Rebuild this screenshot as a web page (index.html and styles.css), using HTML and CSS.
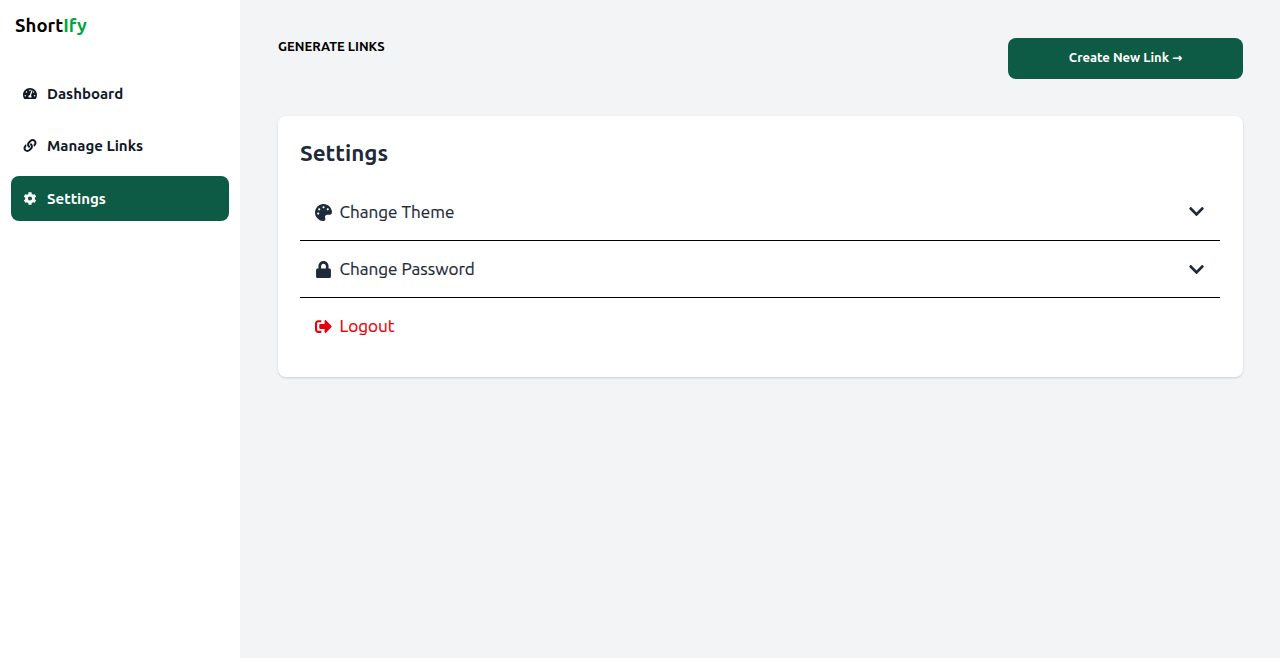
FILE: index.html
```
<!DOCTYPE html>
<html lang="en">
<head>
<meta charset="utf-8">
<title>Shortify</title>
<link rel="stylesheet" href="styles.css">
</head>
<body>
<div class="app">
  <aside class="sidebar">
    <div class="logo">Short<span class="logo-accent">Ify</span></div>
    <nav class="nav">
      <a class="nav-item">
        <svg class="nav-icon" viewBox="0 0 576 512"><path d="M288 32C128.94 32 0 160.94 0 320c0 52.8 14.25 102.26 39.06 144.8 5.61 9.62 16.3 15.2 27.44 15.2h443c11.14 0 21.83-5.58 27.44-15.2C561.75 422.26 576 372.8 576 320c0-159.06-128.94-288-288-288zm0 64c14.71 0 26.58 10.13 30.32 23.65-1.11 2.26-2.64 4.23-3.45 6.67l-9.22 27.67c-5.13 3.49-10.97 6.01-17.64 6.01-17.67 0-32-14.33-32-32S270.33 96 288 96zM96 384c-17.67 0-32-14.33-32-32s14.33-32 32-32 32 14.33 32 32-14.33 32-32 32zm48-160c-17.67 0-32-14.33-32-32s14.33-32 32-32 32 14.33 32 32-14.33 32-32 32zm246.77-72.41l-61.33 184C343.13 347.33 352 364.54 352 384c0 11.72-3.38 22.55-8.88 32H232.88c-5.5-9.45-8.88-20.28-8.88-32 0-33.94 26.5-61.43 59.9-63.59l61.34-184.01c4.17-12.56 17.73-19.45 30.36-15.17 12.57 4.19 19.35 17.79 15.17 30.36zm14.66 57.2l15.52-46.55c3.47-1.29 7.13-2.23 11.05-2.23 17.67 0 32 14.33 32 32s-14.33 32-32 32c-11.38-.01-20.89-6.27-26.57-15.22zM480 384c-17.67 0-32-14.33-32-32s14.33-32 32-32 32 14.33 32 32-14.33 32-32 32z"/></svg>
        <span>Dashboard</span>
      </a>
      <a class="nav-item">
        <svg class="nav-icon" viewBox="0 0 512 512"><path d="M326.612 185.391c59.747 59.809 58.927 155.698.36 214.59-.11.12-.24.25-.36.37l-67.2 67.2c-59.27 59.27-155.699 59.262-214.96 0-59.27-59.26-59.27-155.7 0-214.96l37.106-37.106c9.84-9.84 26.786-3.3 27.294 10.606.648 17.722 3.826 35.527 9.69 52.721 1.986 5.822.567 12.262-3.783 16.612l-13.087 13.087c-28.026 28.026-28.905 73.66-1.155 101.96 28.024 28.579 74.086 28.749 102.325.51l67.2-67.19c28.191-28.191 28.073-73.757 0-101.83-3.701-3.694-7.429-6.564-10.341-8.569a16.037 16.037 0 0 1-6.947-12.606c-.396-10.567 3.348-21.456 11.698-29.806l21.054-21.055c5.521-5.521 14.182-6.199 20.584-1.731a152.482 152.482 0 0 1 20.522 17.197zM467.547 44.449c-59.261-59.262-155.69-59.27-214.96 0l-67.2 67.2c-.12.12-.25.25-.36.37-58.566 58.892-59.387 154.781.36 214.59a152.454 152.454 0 0 0 20.521 17.196c6.402 4.468 15.064 3.789 20.584-1.731l21.054-21.055c8.35-8.35 12.094-19.239 11.698-29.806a16.037 16.037 0 0 0-6.947-12.606c-2.912-2.005-6.64-4.875-10.341-8.569-28.073-28.073-28.191-73.639 0-101.83l67.2-67.19c28.239-28.239 74.3-28.069 102.325.51 27.75 28.3 26.872 73.934-1.155 101.96l-13.087 13.087c-4.35 4.35-5.769 10.79-3.783 16.612 5.864 17.194 9.042 34.999 9.69 52.721.509 13.906 17.454 20.446 27.294 10.606l37.106-37.106c59.271-59.259 59.271-155.699.001-214.959z"/></svg>
        <span>Manage Links</span>
      </a>
      <a class="nav-item nav-item-active">
        <svg class="nav-icon" viewBox="0 0 512 512"><path d="M487.4 315.7l-42.6-24.6c4.3-23.2 4.3-47 0-70.2l42.6-24.6c4.9-2.8 7.1-8.6 5.5-14-11.1-35.6-30-67.8-54.7-94.6-3.8-4.1-10-5.1-14.8-2.3L380.8 110c-17.9-15.4-38.5-27.3-60.8-35.1V25.8c0-5.6-3.9-10.5-9.4-11.7-36.7-8.2-74.3-7.8-109.2 0-5.5 1.2-9.4 6.1-9.4 11.7V75c-22.2 7.9-42.8 19.8-60.8 35.1L88.7 85.5c-4.9-2.8-11-1.9-14.8 2.3-24.7 26.7-43.6 58.9-54.7 94.6-1.7 5.4.6 11.2 5.5 14L67.3 221c-4.3 23.2-4.3 47 0 70.2l-42.6 24.6c-4.9 2.8-7.1 8.6-5.5 14 11.1 35.6 30 67.8 54.7 94.6 3.8 4.1 10 5.1 14.8 2.3l42.6-24.6c17.9 15.4 38.5 27.3 60.8 35.1v49.2c0 5.6 3.9 10.5 9.4 11.7 36.7 8.2 74.3 7.8 109.2 0 5.5-1.2 9.4-6.1 9.4-11.7v-49.2c22.2-7.9 42.8-19.8 60.8-35.1l42.6 24.6c4.9 2.8 11 1.9 14.8-2.3 24.7-26.7 43.6-58.9 54.7-94.6 1.5-5.5-.7-11.3-5.6-14.1zM256 336c-44.1 0-80-35.9-80-80s35.9-80 80-80 80 35.9 80 80-35.9 80-80 80z"/></svg>
        <span>Settings</span>
      </a>
    </nav>
  </aside>
  <main class="main">
    <header class="topbar">
      <h2 class="page-label">GENERATE LINKS</h2>
      <button class="create-btn">Create New Link <span class="arrow">→</span></button>
    </header>
    <section class="card">
      <h1 class="card-title">Settings</h1>
      <div class="row row-border">
        <svg class="row-icon" viewBox="0 0 512 512"><path d="M204.3 5C104.9 24.4 24.8 104.3 5.2 203.4c-37 187 131.7 326.4 258.8 306.7 41.2-6.4 61.4-54.6 42.5-91.7-23.1-45.4 9.9-98.4 60.9-98.4h79.7c35.8 0 64.8-29.6 64.9-65.3C511.5 97.1 368.1-26.9 204.3 5zM96 320c-17.7 0-32-14.3-32-32s14.3-32 32-32 32 14.3 32 32-14.3 32-32 32zm32-128c-17.7 0-32-14.3-32-32s14.3-32 32-32 32 14.3 32 32-14.3 32-32 32zm128-64c-17.7 0-32-14.3-32-32s14.3-32 32-32 32 14.3 32 32-14.3 32-32 32zm128 64c-17.7 0-32-14.3-32-32s14.3-32 32-32 32 14.3 32 32-14.3 32-32 32z"/></svg>
        <span class="row-label">Change Theme</span>
        <svg class="chevron" viewBox="0 0 448 512"><path d="M207.029 381.476L12.686 187.132c-9.373-9.373-9.373-24.569 0-33.941l22.667-22.667c9.357-9.357 24.522-9.375 33.901-.04L224 284.505l154.745-154.021c9.379-9.335 24.544-9.317 33.901.04l22.667 22.667c9.373 9.373 9.373 24.569 0 33.941L240.971 381.476c-9.373 9.372-24.569 9.372-33.942 0z"/></svg>
      </div>
      <div class="row row-border">
        <svg class="row-icon" viewBox="0 0 448 512"><path d="M400 224h-24v-72C376 68.2 307.8 0 224 0S72 68.2 72 152v72H48c-26.5 0-48 21.5-48 48v192c0 26.5 21.5 48 48 48h352c26.5 0 48-21.5 48-48V272c0-26.5-21.5-48-48-48zm-104 0H152v-72c0-39.7 32.3-72 72-72s72 32.3 72 72v72z"/></svg>
        <span class="row-label">Change Password</span>
        <svg class="chevron chevron-low" viewBox="0 0 448 512"><path d="M207.029 381.476L12.686 187.132c-9.373-9.373-9.373-24.569 0-33.941l22.667-22.667c9.357-9.357 24.522-9.375 33.901-.04L224 284.505l154.745-154.021c9.379-9.335 24.544-9.317 33.901.04l22.667 22.667c9.373 9.373 9.373 24.569 0 33.941L240.971 381.476c-9.373 9.372-24.569 9.372-33.942 0z"/></svg>
      </div>
      <div class="row row-danger">
        <svg class="row-icon" viewBox="0 0 512 512"><path d="M497 273L329 441c-15 15-41 4.5-41-17v-96H152c-13.3 0-24-10.7-24-24v-96c0-13.3 10.7-24 24-24h136V88c0-21.4 25.9-32 41-17l168 168c9.3 9.4 9.3 24.6 0 34zM192 436v-40c0-6.6-5.4-12-12-12H96c-17.7 0-32-14.3-32-32V160c0-17.7 14.3-32 32-32h84c6.6 0 12-5.4 12-12V76c0-6.6-5.4-12-12-12H96c-53 0-96 43-96 96v192c0 53 43 96 96 96h84c6.6 0 12-5.4 12-12z"/></svg>
        <span class="row-label">Logout</span>
      </div>
    </section>
  </main>
</div>
</body>
</html>
```

FILE: styles.css
```
* { box-sizing: border-box; }
html, body { margin: 0; height: 100%; }
body {
  font-family: "Ubuntu", "Noto Sans", "Open Sans", sans-serif;
  background: #f3f4f6;
  color: #1e2939;
}
.app { display: flex; min-height: 658px; }
.sidebar { width: 240px; flex: none; background: #fff; padding: 13px 11px 0; }
.logo { font-size: 18.5px; line-height: 24px; font-weight: 700; letter-spacing: .03px; color: #000; padding-left: 4px; }
.logo-accent { color: #00a63e; }
.nav { display: flex; flex-direction: column; gap: 7.6px; margin-top: 33.8px; }
.nav-item { display: flex; align-items: center; height: 45px; padding-left: 12px; border-radius: 8px; font-size: 15px; font-weight: 700; color: #101828; }
.nav-item-active { background: #0d5a45; color: #fff; }
.nav-icon { width: 14px; height: 13px; fill: currentColor; flex: none; margin-right: 10px; }
.main { flex: 1; padding: 38px 37px 0 38px; min-width: 0; }
.topbar { display: flex; justify-content: space-between; align-items: flex-start; height: 78px; }
.page-label { margin: 0; font-size: 13px; line-height: 17px; font-weight: 700; color: #000; }
.create-btn { width: 235px; height: 41px; padding: 0 0 2px; border: 0; border-radius: 8px; background: #0d5a45; color: #fff; font: 700 13px "Ubuntu", "Noto Sans", sans-serif; }
.arrow { font-family: "DejaVu Sans", sans-serif; font-size: 12px; }
.card { background: #fff; border-radius: 8px; box-shadow: 0 1px 3px rgba(0,0,0,.1), 0 1px 2px rgba(0,0,0,.06); padding: 22px 23px 23px 22px; height: 261px; }
.card-title { margin: 0 0 16px; font-size: 22.4px; line-height: 30px; font-weight: 700; color: #1e2939; }
.row { display: flex; align-items: center; height: 57px; padding-left: 15px; font-size: 17.1px; color: #1e2939; -webkit-text-stroke: .2px currentColor; }
.row-border { border-bottom: 1px solid #000; }
.row-danger { color: #e7000b; height: 56px; }
.row-icon { width: 17px; height: 17px; fill: currentColor; flex: none; margin-right: 7.5px; }
.row-label { flex: 1; padding-bottom: 2px; }
.chevron { width: 17px; height: 17px; margin: 0 15px 1px 0; fill: currentColor; flex: none; }
.chevron-low { margin-bottom: 0; }
```
